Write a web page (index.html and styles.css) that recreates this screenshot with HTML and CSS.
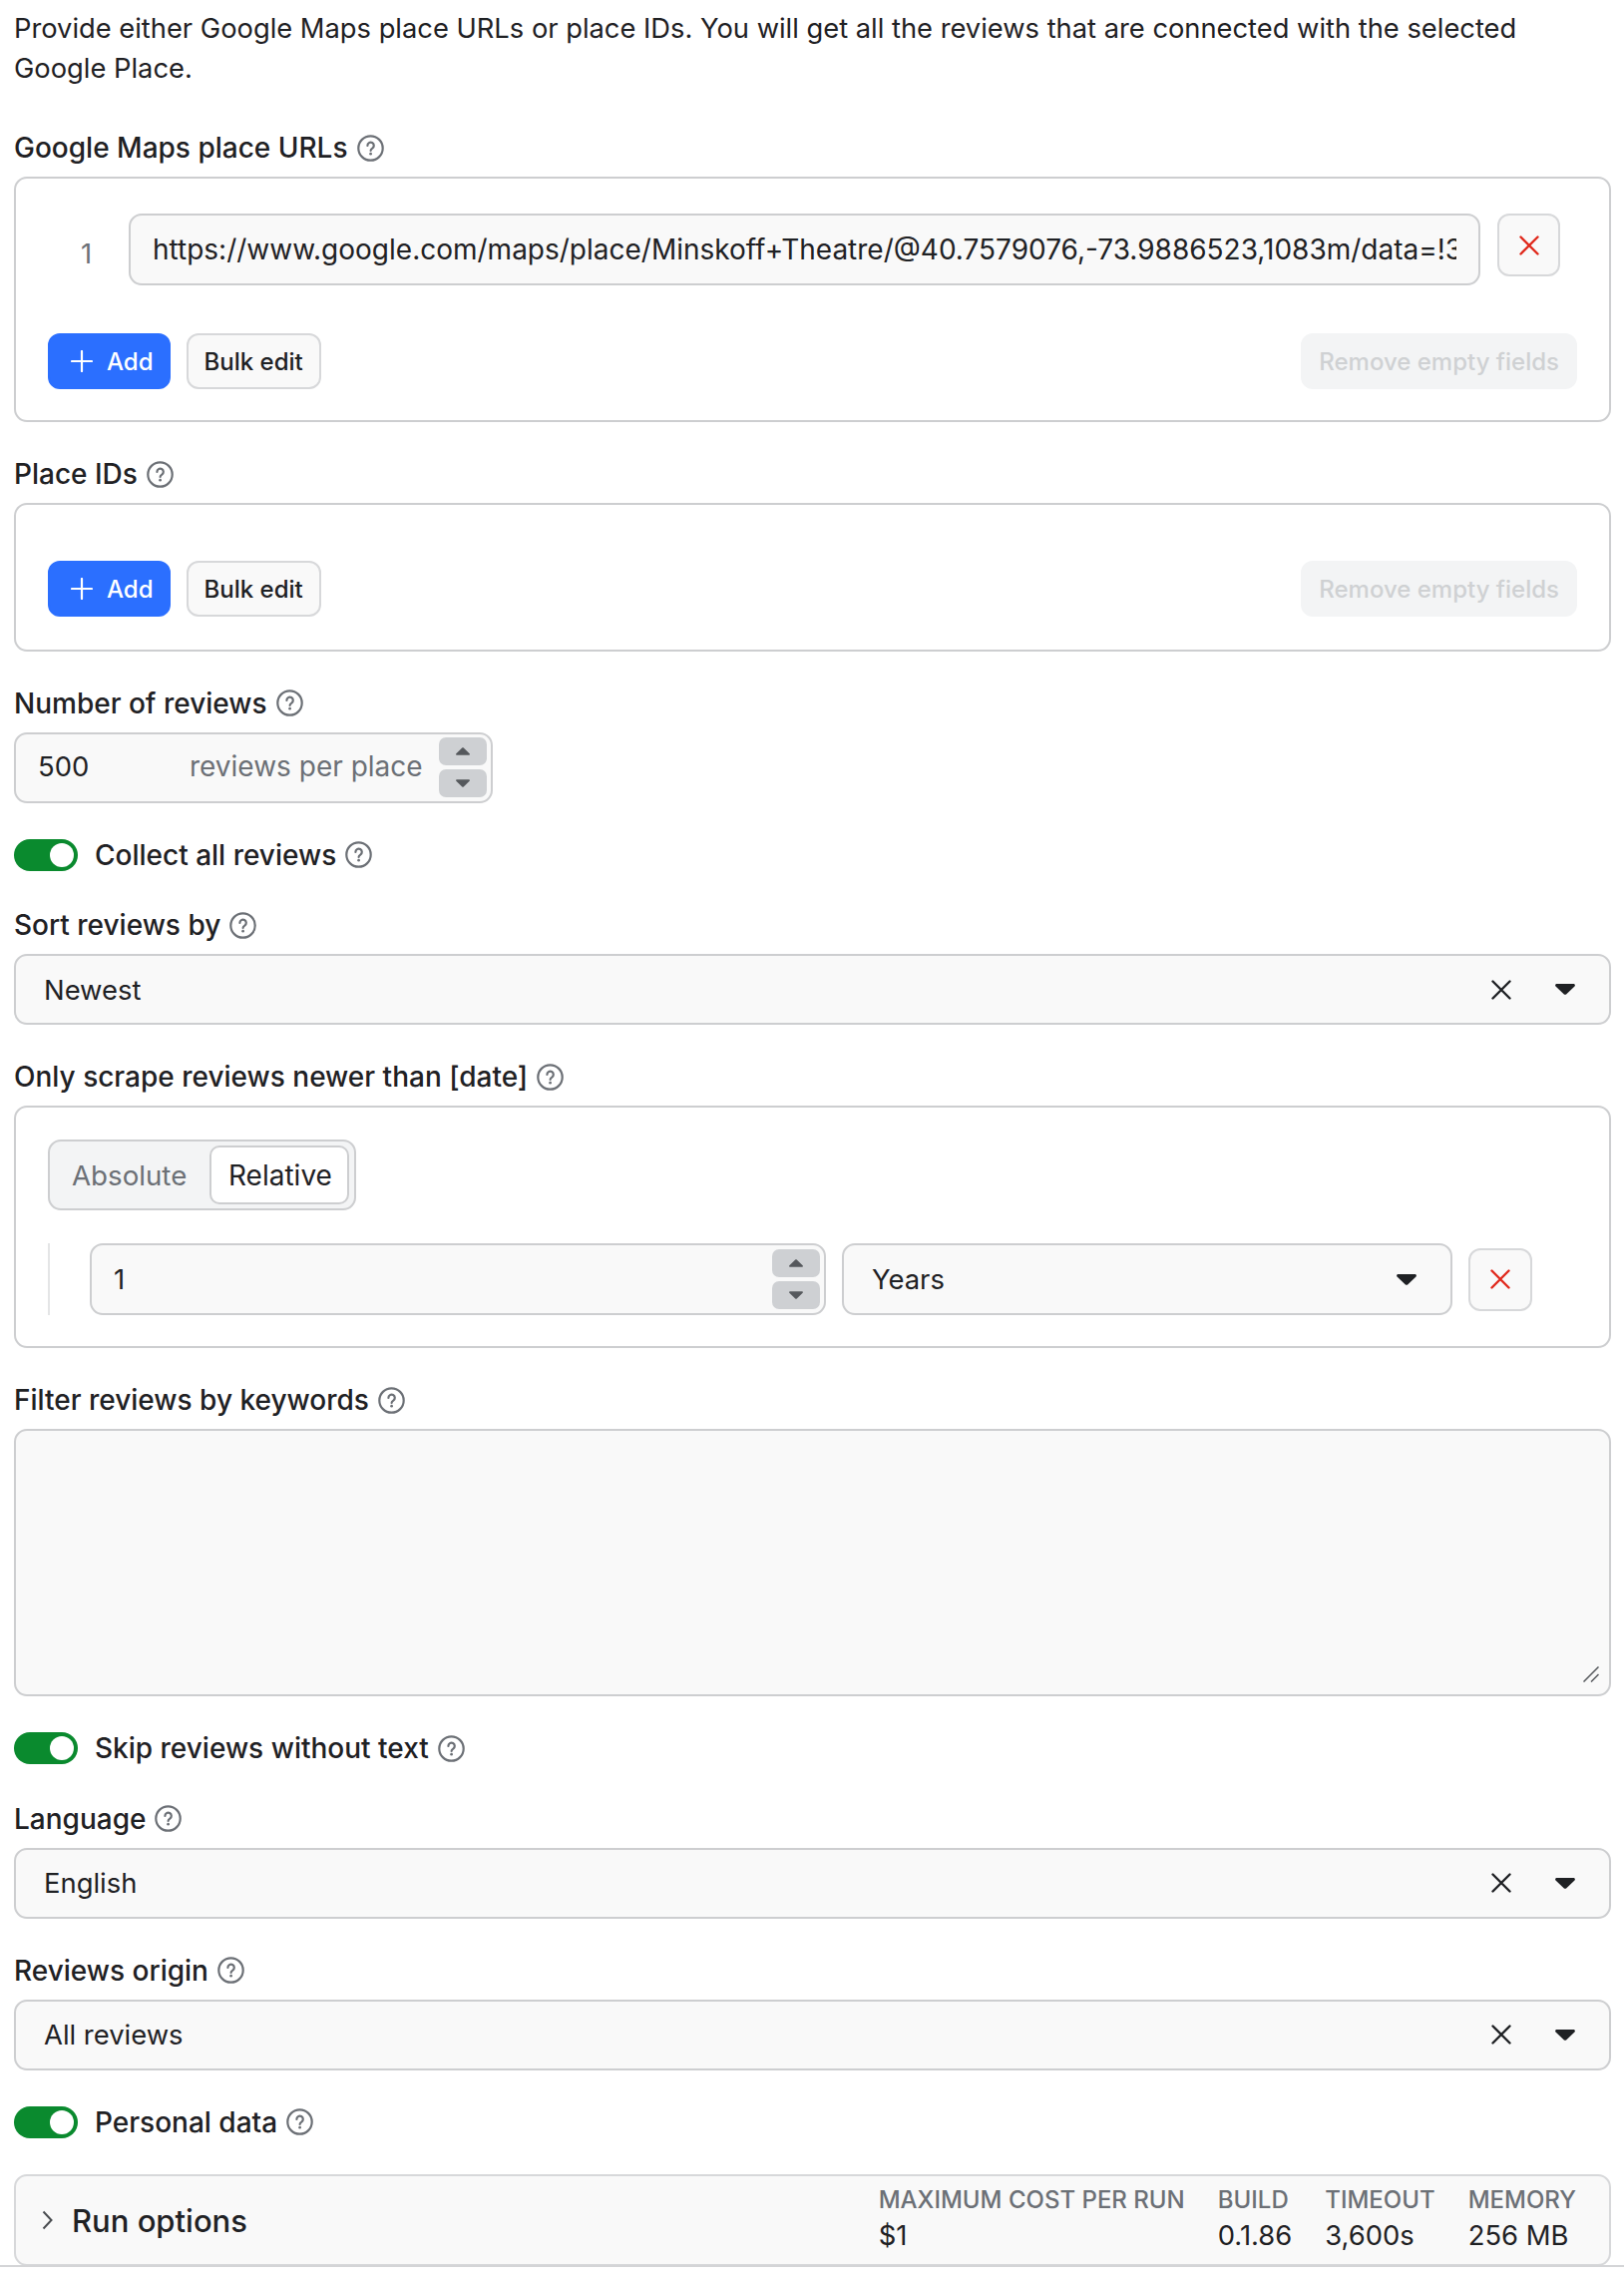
FILE: index.html
```html
<!DOCTYPE html>
<html lang="en">
<head>
<meta charset="utf-8">
<title>Google Maps Reviews input</title>
<link rel="stylesheet" href="styles.css">
</head>
<body>
<svg class="defs" width="0" height="0" aria-hidden="true">
  <symbol id="help" viewBox="0 0 27 27">
    <circle cx="13.5" cy="13.5" r="12.2" fill="none" stroke="currentColor" stroke-width="2.2"/>
    <path d="M10.4 10.9a3.2 3.2 0 1 1 4.9 2.7c-1 .6-1.7 1.1-1.7 2.3" fill="none" stroke="currentColor" stroke-width="2.2" stroke-linecap="round"/>
    <circle cx="13.6" cy="19.2" r="1.35" fill="currentColor"/>
  </symbol>
  <symbol id="cross" viewBox="0 0 20 20">
    <path d="M1.5 1.5l17 17M18.5 1.5l-17 17" fill="none" stroke="currentColor" stroke-width="2.4" stroke-linecap="round"/>
  </symbol>
  <symbol id="plus" viewBox="0 0 22 22">
    <path d="M11 1v20M1 11h20" fill="none" stroke="currentColor" stroke-width="2.2" stroke-linecap="round"/>
  </symbol>
  <symbol id="down" viewBox="0 0 20 11">
    <path d="M1.6 0h16.8c1.3 0 2 1.5 1.1 2.4l-8.4 8c-.6.6-1.6.6-2.2 0l-8.4-8C-.4 1.5.3 0 1.6 0z" fill="currentColor"/>
  </symbol>
  <symbol id="up" viewBox="0 0 20 11">
    <path d="M1.6 11h16.8c1.3 0 2-1.5 1.1-2.4l-8.4-8c-.6-.6-1.6-.6-2.2 0l-8.4 8C-.4 9.5.3 11 1.6 11z" fill="currentColor"/>
  </symbol>
</svg>

<main class="form">
  <p class="intro">Provide either Google Maps place URLs or place IDs. You will get all the reviews that are connected with the selected Google Place.</p>

  <section class="field">
    <div class="label">Google Maps place URLs <svg class="help"><use href="#help"/></svg></div>
    <div class="box box-urls">
      <div class="url-row">
        <span class="index">1</span>
        <div class="input url-input"><span class="clip">https://www.google.com/maps/place/Minskoff+Theatre/@40.7579076,-73.9886523,1083m/data=!3m1</span></div>
        <button class="icon-btn"><svg class="cross-red"><use href="#cross"/></svg></button>
      </div>
      <div class="actions">
        <button class="btn primary"><svg class="plus"><use href="#plus"/></svg>Add</button>
        <button class="btn">Bulk edit</button>
        <button class="btn disabled">Remove empty fields</button>
      </div>
    </div>
  </section>

  <section class="field">
    <div class="label">Place IDs <svg class="help"><use href="#help"/></svg></div>
    <div class="box box-ids">
      <div class="actions">
        <button class="btn primary"><svg class="plus"><use href="#plus"/></svg>Add</button>
        <button class="btn">Bulk edit</button>
        <button class="btn disabled">Remove empty fields</button>
      </div>
    </div>
  </section>

  <section class="field">
    <div class="label">Number of reviews <svg class="help"><use href="#help"/></svg></div>
    <div class="input number-input">
      <span class="num-value">500</span>
      <span class="unit">reviews per place</span>
      <div class="spin">
        <span class="spin-btn"><svg class="spin-arrow"><use href="#up"/></svg></span>
        <span class="spin-btn"><svg class="spin-arrow"><use href="#down"/></svg></span>
      </div>
    </div>
  </section>

  <div class="toggle-row"><span class="toggle"><span class="knob"></span></span>Collect all reviews <svg class="help"><use href="#help"/></svg></div>

  <section class="field">
    <div class="label">Sort reviews by <svg class="help"><use href="#help"/></svg></div>
    <div class="input select">
      <span class="select-value">Newest</span>
      <svg class="clear"><use href="#cross"/></svg>
      <svg class="caret"><use href="#down"/></svg>
    </div>
  </section>

  <section class="field">
    <div class="label">Only scrape reviews newer than [date] <svg class="help"><use href="#help"/></svg></div>
    <div class="box box-date">
      <div class="segmented">
        <span class="seg">Absolute</span>
        <span class="seg active">Relative</span>
      </div>
      <div class="date-row">
        <div class="input date-num">
          <span class="num-value grow">1</span>
          <div class="spin">
            <span class="spin-btn"><svg class="spin-arrow"><use href="#up"/></svg></span>
            <span class="spin-btn"><svg class="spin-arrow"><use href="#down"/></svg></span>
          </div>
        </div>
        <div class="input select">
          <span class="select-value">Years</span>
          <svg class="caret caret-years"><use href="#down"/></svg>
        </div>
        <button class="icon-btn"><svg class="cross-red"><use href="#cross"/></svg></button>
      </div>
    </div>
  </section>

  <section class="field">
    <div class="label">Filter reviews by keywords <svg class="help"><use href="#help"/></svg></div>
    <div class="input textarea">
      <svg class="resizer" viewBox="0 0 16 16"><path d="M15.5.5L.5 15.5M15.5 8L8 15.5" fill="none" stroke="#55585c" stroke-width="1.5"/></svg>
    </div>
  </section>

  <div class="toggle-row"><span class="toggle"><span class="knob"></span></span>Skip reviews without text <svg class="help"><use href="#help"/></svg></div>

  <section class="field">
    <div class="label">Language <svg class="help"><use href="#help"/></svg></div>
    <div class="input select">
      <span class="select-value">English</span>
      <svg class="clear"><use href="#cross"/></svg>
      <svg class="caret"><use href="#down"/></svg>
    </div>
  </section>

  <section class="field">
    <div class="label">Reviews origin <svg class="help"><use href="#help"/></svg></div>
    <div class="input select">
      <span class="select-value">All reviews</span>
      <svg class="clear"><use href="#cross"/></svg>
      <svg class="caret"><use href="#down"/></svg>
    </div>
  </section>

  <div class="toggle-row"><span class="toggle"><span class="knob"></span></span>Personal data <svg class="help"><use href="#help"/></svg></div>

  <section class="run-options">
    <svg class="chevron" viewBox="0 0 11 20"><path d="M1.5 1.5l8 8.5-8 8.5" fill="none" stroke="currentColor" stroke-width="2"/></svg>
    <span class="run-title">Run options</span>
    <dl class="meta">
      <div class="meta-col"><dt>Maximum cost per run</dt><dd>$1</dd></div>
      <div class="meta-col"><dt>Build</dt><dd>0.1.86</dd></div>
      <div class="meta-col"><dt>Timeout</dt><dd>3,600s</dd></div>
      <div class="meta-col"><dt>Memory</dt><dd>256 MB</dd></div>
    </dl>
  </section>
</main>
<div class="bottom-bar"></div>
</body>
</html>
```
FILE: styles.css
```css
* { box-sizing: border-box; }
html, body { margin: 0; padding: 0; background: #fff; }
body {
  width: 1628px;
  height: 2284px;
  overflow: hidden;
  font-family: Inter, "Liberation Sans", sans-serif;
  font-size: 27.4px;
  color: #1f2124;
}
.defs { position: absolute; }
button { font: inherit; color: inherit; cursor: pointer; }

.form {
  height: 2271px;
  padding: 9px 13px 0 14px;
  display: flex;
  flex-direction: column;
  gap: 34px;
}
.intro { margin: 0 0 7px; font-size: 27.3px; line-height: 40px; }

.label {
  height: 36px;
  margin-bottom: 11px;
  display: flex;
  align-items: center;
  gap: 9px;
  font-size: 28px;
  font-weight: 500;
}
.help { width: 27px; height: 27px; color: #6c7076; flex: none; }

.box {
  border: 2px solid #cdced0;
  border-radius: 13px;
  background: #fff;
}
.box-urls { height: 246px; padding: 35px 32px 0; }
.box-ids { height: 148.5px; padding: 56px 32px 0; }
.box-date { height: 243px; padding: 32px 32px 0; }

.url-row { display: flex; align-items: flex-start; }
.index { width: 81px; padding: 20px 0 0 33px; color: #6c7076; line-height: 40px; }
.url-input { flex: 1; min-width: 0; height: 72px; padding: 0 22px; font-size: 28px; }
.clip { display: block; width: 100%; overflow: hidden; white-space: nowrap; }

.input {
  display: flex;
  align-items: center;
  border: 2px solid #cdced0;
  border-radius: 13px;
  background: #f9f9f9;
}

.icon-btn {
  flex: none;
  width: 63px;
  height: 63px;
  display: flex;
  align-items: center;
  justify-content: center;
  padding: 0;
  border: 2px solid #d7d8da;
  border-radius: 12px;
  background: #f9f9f9;
}
.url-row .icon-btn { margin: 0 17px 0 17px; }
.cross-red { width: 20px; height: 20px; color: #e0291c; }

.actions { display: flex; gap: 16px; margin-top: 48px; }
.box-ids .actions { margin-top: 0; }
.btn {
  height: 56px;
  padding: 0 16px;
  display: inline-flex;
  align-items: center;
  border: 2px solid #d7d8da;
  border-radius: 12px;
  background: #f9f9f9;
  font-size: 24px;
  font-weight: 500;
  white-space: nowrap;
}
.btn.primary {
  gap: 14px;
  padding: 0 15px 0 21px;
  border-color: #2b6fff;
  background: #2b6fff;
  color: #fff;
}
.btn.disabled {
  margin-left: auto;
  border-color: #f3f4f5;
  background: #f3f4f5;
  color: #cfd1d3;
  padding: 0 16px;
}
.plus { width: 22px; height: 22px; flex: none; }

.number-input { width: 480px; height: 71px; padding: 0 4px 2px 22px; }
.number-input .spin { margin-bottom: -2px; }
.num-value { width: 152px; flex: none; }
.grow { flex: 1; }
.unit { flex: 1; color: #6c7076; font-size: 28px; white-space: nowrap; }
.spin { width: 48px; flex: none; display: flex; flex-direction: column; gap: 4px; }
.spin-btn {
  height: 28px;
  display: flex;
  align-items: center;
  justify-content: center;
  border-radius: 7px;
  background: #ced0d3;
}
.spin-arrow { width: 14px; height: 8px; color: #55585c; }

.toggle-row {
  height: 38px;
  display: flex;
  align-items: center;
  gap: 9px;
  font-size: 28px;
  font-weight: 500;
}
.toggle {
  width: 64px;
  height: 32px;
  margin-right: 8px;
  padding: 4px;
  display: flex;
  justify-content: flex-end;
  border-radius: 16px;
  background: #0a8a2e;
}
.knob { width: 24px; height: 24px; border-radius: 50%; background: #fff; }

.select { height: 71px; padding: 0 34px 0 28px; }
.select-value { flex: 1; }
.clear { width: 20px; height: 20px; margin-right: 44px; color: #1f2124; }
.caret { width: 20px; height: 11px; color: #1f2124; }
.caret-years { margin-right: 0; }

.segmented {
  width: 309px;
  height: 71px;
  padding: 4px 5px 4px 4px;
  display: flex;
  align-items: stretch;
  border: 2px solid #cdced0;
  border-radius: 13px;
  background: #f3f4f5;
}
.seg {
  flex: 1;
  display: flex;
  align-items: center;
  padding-left: 18px;
  color: #6c7076;
  font-size: 27.7px;
}
.seg.active {
  flex: none;
  width: 140px;
  padding-left: 17px;
  border: 2px solid #cdced0;
  border-radius: 10px;
  background: #fff;
  color: #1f2124;
  font-size: 28px;
}
.date-row {
  margin-top: 33px;
  height: 72px;
  padding: 0 45px 0 40px;
  display: grid;
  grid-template-columns: 738px 612px 64px;
  column-gap: 16px;
  align-items: center;
  border-left: 2px solid #e4e5e6;
}
.date-num { height: 72px; padding: 0 4px 0 22px; }
.date-row .select { height: 72px; }
.date-row .icon-btn { width: 64px; }

.textarea { position: relative; height: 268px; }
.resizer { position: absolute; right: 10px; bottom: 12px; width: 16px; height: 16px; }

.run-options {
  height: 92px;
  flex: none;
  padding: 0 33px 0 26px;
  display: flex;
  align-items: center;
  border: 2px solid #d7d8da;
  border-radius: 13px;
  background: #f9f9f9;
}
.chevron { width: 11px; height: 20px; color: #4a4d51; flex: none; }
.run-title { flex: 1; margin-left: 19px; font-size: 31px; font-weight: 500; }
.meta { display: flex; gap: 33px; margin: -5px 0 0; }
.meta-col { display: flex; flex-direction: column; gap: 5px; }
.meta dt { font-size: 24px; font-weight: 500; line-height: 30px; text-transform: uppercase; color: #6c7076; white-space: nowrap; }
.meta dd { margin: 0; line-height: 30px; white-space: nowrap; }

.bottom-bar { position: relative; height: 13px; background: #fff; border-top: 2px solid #d4d5d7; margin-top: -1px; }
```
